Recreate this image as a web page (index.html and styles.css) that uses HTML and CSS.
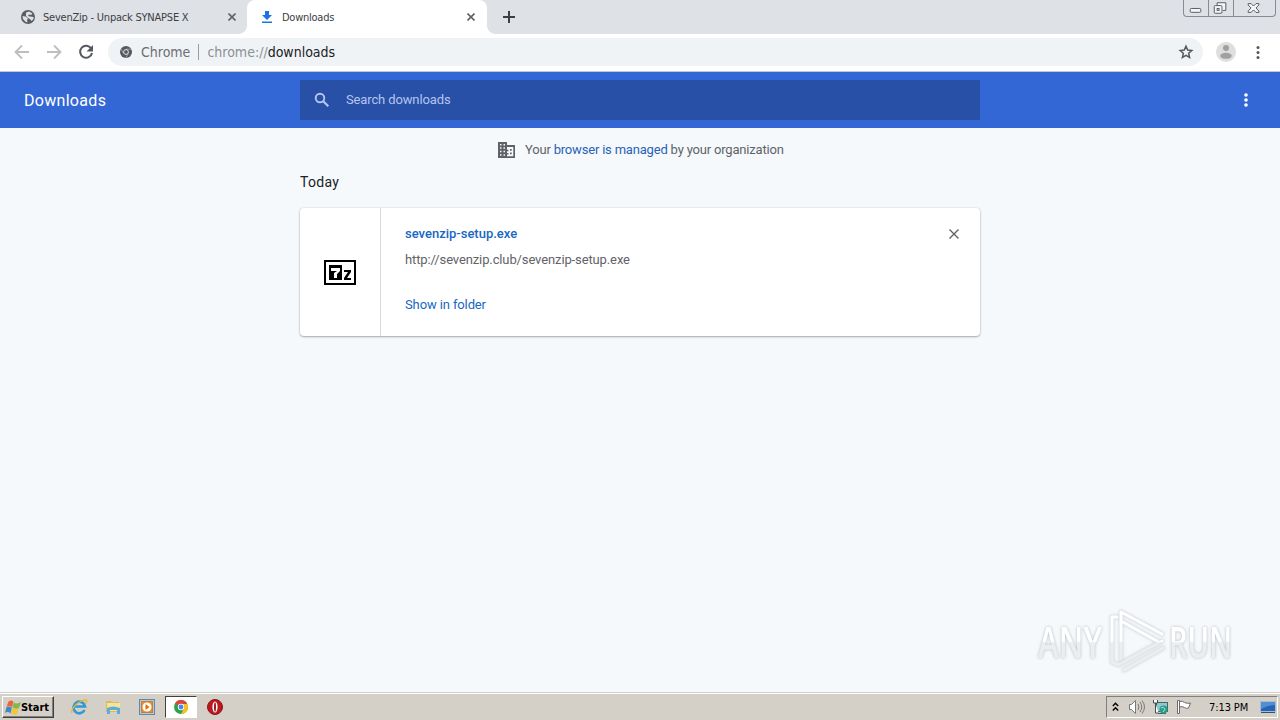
FILE: index.html
```html
<!DOCTYPE html>
<html lang="en">
  <head>
    <meta charset="UTF-8" />
    <meta name="viewport" content="width=device-width, initial-scale=1.0" />
    <title>Downloads</title>
    <link rel="stylesheet" href="styles.css">
  </head>
  <body>
    <!-- Tab strip -->
    <div class="tabs">
      <div class="tab tab-back">
        <svg class="favicon" width="14" height="14" viewBox="0 0 14 14">
          <circle cx="7" cy="7" r="7" fill="#5a5e63" />
          <path d="M1.500 6l3 .5 2.500 2-1 1.500.5 2.500-2-.7L2 9zM5 2.500l3-1 3.500 2L10 5l-2-.5-1 1.500 2 .5 3.500.5v2l-2 2-1.500-2-2-1-2-2z" fill="#dee1e6" />
        </svg>
        <span class="tab-title title-back">SevenZip - Unpack SYNAPSE X</span>
        <svg class="tab-close" width="8" height="8" viewBox="0 0 8 8"><path d="M.5.5l7 7m0-7l-7 7" /></svg>
      </div>
      <div class="tab tab-active">
        <svg class="favicon" width="14" height="14" viewBox="0 0 14 14">
          <path d="M5 1h4v4h3L7 10 2 5h3zM2 11.500h10V13H2z" fill="#1a73e8" />
        </svg>
        <span class="tab-title title-active">Downloads</span>
        <svg class="tab-close" width="8" height="8" viewBox="0 0 8 8"><path d="M.5.5l7 7m0-7l-7 7" /></svg>
      </div>
      <svg class="new-tab" width="12" height="12" viewBox="0 0 12 12"><path d="M6 0v12M0 6h12" /></svg>
      <div class="win-buttons">
        <svg width="25" height="16" viewBox="0 0 25 16"><rect x="6.500" y="8.500" width="11" height="4" rx="1" /></svg>
        <svg width="25" height="16" viewBox="0 0 25 16">
          <path d="M8.500 5.500v-3h9v8h-3" /><rect x="5.500" y="5.500" width="8" height="8" rx="1" /><rect x="8.500" y="8.500" width="2" height="2" />
        </svg>
        <svg width="42" height="16" viewBox="0 0 42 16">
          <path d="M14.500 3.500h3l2.500 2.500 2.500-2.500h3v1.500L22.500 8l3 3v1.500h-3L20 10l-2.500 2.500h-3V11l3-3-3-3z" />
        </svg>
      </div>
    </div>

    <!-- Toolbar -->
    <div class="toolbar">
      <svg class="nav-icon" width="16" height="16" viewBox="0 0 16 16"><path d="M15 8H2M8 1.500L1.500 8 8 14.500" stroke="#bcbec1" /></svg>
      <svg class="nav-icon" width="16" height="16" viewBox="0 0 16 16"><path d="M1 8h13M8 1.500L14.500 8 8 14.500" stroke="#bcbec1" /></svg>
      <svg class="nav-icon" width="16" height="16" viewBox="0 0 16 16">
        <path d="M13.200 4.500A6 6 0 1 0 14 9" stroke="#55585c" stroke-width="2" /><path d="M15 1v6.500H8.500z" fill="#55585c" />
      </svg>
      <div class="omnibox">
        <svg width="12" height="12" viewBox="0 0 12 12">
          <circle cx="6" cy="6" r="6" fill="#55585c" />
          <path d="M6 3.200h5.300M3.600 7.400L1 3M8.400 7.400L5.800 11.800" stroke="#b9bdc1" stroke-width=".7" />
          <circle cx="6" cy="6" r="2.400" fill="#55585c" stroke="#e0e3e6" stroke-width="1" />
        </svg>
        <span class="site">Chrome</span>
        <span class="divider"></span>
        <span class="url"><span class="scheme">chrome://</span><span class="host">downloads</span></span>
        <svg class="star" width="16" height="16" viewBox="0 0 16 16">
          <path d="M8 2.200l1.700 3.900 4.100.4-3.100 2.800.9 4.100L8 11.300l-3.600 2.100.9-4.100-3.100-2.800 4.100-.4z" />
        </svg>
      </div>
      <svg class="avatar" width="20" height="20" viewBox="0 0 20 20">
        <circle cx="10" cy="10" r="10" fill="#dedede" />
        <circle cx="10" cy="6" r="3" fill="#a0a0a0" /><ellipse cx="10" cy="13.800" rx="5.800" ry="3" fill="#a0a0a0" />
      </svg>
      <svg class="menu" width="4" height="14" viewBox="0 0 4 14" fill="#55585c">
        <circle cx="2" cy="2.500" r="1.500" /><circle cx="2" cy="7.500" r="1.500" /><circle cx="2" cy="12.500" r="1.500" />
      </svg>
    </div>

    <!-- Downloads page header -->
    <header>
      <h1>Downloads</h1>
      <div class="search">
        <svg width="16" height="16" viewBox="0 0 16 16" fill="none" stroke="#b4c5ee">
          <circle cx="6" cy="6" r="4.300" stroke-width="1.900" /><path d="M9.300 9.300l5 5" stroke-width="2.200" />
        </svg>
        <span>Search downloads</span>
      </div>
      <svg class="more" width="4" height="14" viewBox="0 0 4 14" fill="#fff">
        <circle cx="2" cy="2" r="1.800" /><circle cx="2" cy="7" r="1.800" /><circle cx="2" cy="12" r="1.800" />
      </svg>
    </header>

    <main>
      <div class="managed">
        <svg width="17" height="16" viewBox="0 0 17 16">
          <path d="M0 0h9v3h8v13H0z" fill="#5f6368" />
          <path d="M2 2h1.500v1.500H2zM5.500 2H7v1.500H5.500zM2 5.300h1.500v1.500H2zM5.500 5.300H7v1.500H5.500zM2 8.800h1.500v1.500H2zM5.500 8.800H7v1.500H5.500zM2 12.300h1.500v1.500H2zM5.500 12.300H7v1.500H5.500zM9 5h6.300v9.300H9v-1.700h1.500v-1.500H9V9.300h1.500V7.800H9z" fill="#f5f9fc" />
          <path d="M12 7h1.700v1.700H12zM12 10.500h1.700v1.700H12z" fill="#5f6368" />
        </svg>
        <p>Your <a>browser is managed</a> by your organization</p>
      </div>
      <h2>Today</h2>
      <div class="card">
        <div class="file-icon">
          <svg width="32" height="25" viewBox="0 0 32 25">
            <rect x="1" y="1" width="30" height="23" fill="#fff" stroke="#000" stroke-width="2" />
            <path d="M5 5h13v15H5z" />
            <path d="M7 8h9v3l-3 3v4h-3v-5l3-2H7z" fill="#fff" />
            <path d="M20 10h7v2l-4 6h4v2h-7v-2l4-6h-4z" />
          </svg>
        </div>
        <div class="details">
          <a class="name">sevenzip-setup.exe</a>
          <p class="source">http://sevenzip.club/sevenzip-setup.exe</p>
          <a class="show">Show in folder</a>
        </div>
        <svg class="remove" width="10" height="10" viewBox="0 0 10 10"><path d="M.5.5l9 9m0-9l-9 9" /></svg>
      </div>

      <!-- Watermark -->
      <div class="watermark">
        <svg width="220" height="80" viewBox="0 0 220 80">
          <defs>
            <linearGradient id="fade" x1="0" y1="0" x2="0" y2="80" gradientUnits="userSpaceOnUse">
              <stop offset="0.490" stop-color="#fff" />
              <stop offset="0.510" stop-color="#ebedef" />
            </linearGradient>
          </defs>
          <g class="mark-text" fill="url(#fade)">
            <text x="8" y="56" textLength="64" lengthAdjust="spacingAndGlyphs">ANY</text>
            <text x="139" y="56" textLength="63" lengthAdjust="spacingAndGlyphs">RUN</text>
          </g>
          <g class="mark-edge"><path d="M87 15h-5v45l7 3M91 57V10l41 22M91 19l36 20M90 62l42-23M94 68l39-22" /></g>
          <g class="mark-play"><path d="M87 15h-5v45l7 3M91 57V10l41 22M91 19l36 20M90 62l42-23M94 68l39-22" /></g>
        </svg>
      </div>
    </main>

    <!-- Taskbar -->
    <div class="taskbar">
      <div class="start">
        <svg width="16" height="15" viewBox="0 0 16 15">
          <path d="M3.500 1.500q3-2 5 .5L7 7.500Q4.500 5 1.500 7z" fill="#e8663a" /><path d="M9 2.500q3 2 7-.5L14 8Q11 9.500 7.500 7.500z" fill="#83b84b" />
          <path d="M1.300 7.500q3-2 5.500.5L5.500 13.500Q3 11 0 13z" fill="#4387c9" /><path d="M7.400 8q3 2 6.300.5L12 14q-3 1.500-6-.5z" fill="#f2c63a" />
        </svg>
        <span>Start</span>
      </div>
      <div class="apps">
        <div class="app">
          <svg width="18" height="18" viewBox="0 0 18 18" fill="none">
            <path d="M14.500 12A5.800 5.800 0 1 1 15 8.500H5" stroke="#3299d8" stroke-width="2.700" />
            <path d="M2 15C0 12 7 4 14 2c4-1 3 2 1 4" stroke="#e8b638" stroke-width="1.300" />
          </svg>
        </div>
        <div class="app">
          <svg width="16" height="16" viewBox="0 0 16 16">
            <path d="M1 2h5l1 1h7v10H1z" fill="#ddb95a" /><path d="M2 4h13v8H2z" fill="#f7e49b" />
            <path d="M2 9q6-3 13 0v6h-3v-4H5v4H2z" fill="#5baedb" />
          </svg>
        </div>
        <div class="app">
          <svg width="16" height="16" viewBox="0 0 16 16">
            <rect x=".5" y=".5" width="15" height="15" fill="#a6cdee" stroke="#5889b7" />
            <rect x="2.500" y="2.500" width="11" height="11" fill="#f28b20" stroke="#d97917" />
            <circle cx="8" cy="8" r="4.500" fill="#fff" /><path d="M6.500 5l4 3-4 3z" fill="#dd6c0b" />
          </svg>
        </div>
        <div class="app app-open">
          <svg width="14" height="14" viewBox="0 0 14 14">
            <circle cx="7" cy="7" r="7" fill="#2ba24c" />
            <path d="M7 7L.9 3.500A7 7 0 0 1 13.100 3.500z" fill="#dd4437" />
            <path d="M7 4h6.300A7 7 0 0 1 7 14l3-6z" fill="#fbc116" />
            <circle cx="7" cy="7" r="3.200" fill="#fff" /><circle cx="7" cy="7" r="2.400" fill="#4285f4" />
          </svg>
        </div>
        <div class="app">
          <svg width="16" height="16" viewBox="0 0 16 16">
            <circle cx="8" cy="8" r="7.500" fill="#bd1820" stroke="#8d1218" /><ellipse cx="8" cy="8" rx="2.600" ry="5.500" fill="#fff" />
            <ellipse cx="8" cy="8" rx="1" ry="4.800" fill="#a5181c" />
          </svg>
        </div>
      </div>
      <div class="tray">
        <svg width="7" height="10" viewBox="0 0 7 10" fill="none" stroke="#000" stroke-width="1.400"><path d="M.8 4l2.700-2.700L6.200 4M.8 8.500l2.700-2.700 2.700 2.700" /></svg>
        <svg class="volume" width="17" height="16" viewBox="0 0 17 16" fill="none" stroke="#77797b">
          <path d="M1.500 5.500h2l4-4v13l-4-4h-2z" fill="#fff" /><path d="M10 5q2 3 0 6M12 3q3.500 5 0 10M14 1.500q5 6.500 0 13" />
        </svg>
        <svg class="network" width="17" height="16" viewBox="0 0 17 16">
          <rect x="4.500" y="3.500" width="11" height="9" fill="#8bc9d2" stroke="#4b6265" /><path d="M6 14.500h8" stroke="#4b6265" />
          <circle cx="11.500" cy="10.500" r="4" fill="#2b9c88" /><path d="M9 9q3-2 4 1l-2 3" stroke="#a6e3cd" fill="none" />
          <path d="M1.500 1v3h4V1M3.500 4v10h3" stroke="#4a4a4a" fill="#fff" />
        </svg>
        <svg class="flag" width="16" height="16" viewBox="0 0 16 16">
          <path d="M1.500 1.500h2v13h-2zM3.500 2.500q3-1 5 1 3 1.500 6 .5l-2 5q-2 1-4-.5-2-1.500-5-.5z" fill="#fff" stroke="#6b6b6b" />
        </svg>
        <span class="clock">7:13 PM</span>
        <svg class="desktop" width="16" height="13" viewBox="0 0 16 13">
          <rect x=".5" y=".5" width="15" height="10" fill="#2364b5" stroke="#a7bbd1" /><path d="M1 1h14v3Q8 4 1 8z" fill="#538ed3" />
          <path d="M1 11.500h14" stroke="#384d69" />
        </svg>
      </div>
    </div>
  </body>
</html>
```
FILE: styles.css
```css
* {
  margin: 0;
  padding: 0;
  box-sizing: border-box;
}

body {
  width: 1280px;
  height: 720px;
  overflow: hidden;
  display: flex;
  flex-direction: column;
  background: #f5f9fc;
  font-family: Roboto, "Liberation Sans", sans-serif;
  white-space: nowrap;
}

svg {
  display: block;
  flex-shrink: 0;
}

/* Tab strip */
.tabs {
  display: flex;
  align-items: center;
  height: 34px;
  background: #dee1e6;
}

.tab {
  display: flex;
  align-items: center;
  height: 34px;
  font-family: "DejaVu Sans Condensed", "DejaVu Sans", sans-serif;
  font-size: 11px;
  color: #3c4043;
}

.tab-back {
  width: 247px;
  padding: 0 11px 0 21px;
}

.tab-active {
  position: relative;
  width: 240px;
  padding: 0 12px 0 13px;
  background: #fff;
  border-radius: 8px 8px 0 0;
}

.tab-active::before,
.tab-active::after {
  content: "";
  position: absolute;
  bottom: 0;
  width: 8px;
  height: 8px;
}

.tab-active::before {
  left: -8px;
  background: radial-gradient(circle at 0 0, transparent 7.5px, #fff 8px);
}

.tab-active::after {
  right: -8px;
  background: radial-gradient(circle at 100% 0, transparent 7.5px, #fff 8px);
}

.tab-title {
  margin-left: 8px;
}

.title-back {
  letter-spacing: -0.22px;
}

.title-active {
  letter-spacing: -0.25px;
}

.tab-close {
  margin-left: auto;
  fill: none;
  stroke: #5f6368;
  stroke-width: 1.6;
}

.new-tab {
  margin-left: 16px;
  stroke: #3c4043;
  stroke-width: 2;
}

.win-buttons {
  display: flex;
  align-self: flex-start;
  height: 17px;
  margin: 0 4px 0 auto;
  border: 1px solid #878b92;
  border-top: none;
  border-radius: 0 0 4px 4px;
}

.win-buttons svg {
  fill: #f5f6f8;
  stroke: #555a61;
}

.win-buttons svg:first-child {
  width: 24px;
}

.win-buttons svg + svg {
  border-left: 1px solid #878b92;
}

/* Toolbar */
.toolbar {
  display: flex;
  align-items: center;
  height: 38px;
  padding: 0 20px 2px 14px;
  background: #fff;
  border-bottom: 1px solid #c3c8d2;
}

.nav-icon {
  margin-right: 16px;
  fill: none;
  stroke-width: 1.8;
}

.omnibox {
  display: flex;
  align-items: center;
  width: 1095px;
  height: 28px;
  margin-left: -2px;
  padding: 0 9px 0 12px;
  border-radius: 14px;
  background: #f0f3f5;
  font-family: "DejaVu Sans Condensed", "DejaVu Sans", sans-serif;
  font-size: 14px;
}

.site {
  margin-left: 9px;
  color: #6a6e73;
}

.divider {
  width: 1px;
  height: 16px;
  margin: 0 8px;
  background: #9a9da1;
}

.scheme {
  color: #8b9095;
}

.host {
  color: #202124;
}

.star {
  margin-left: auto;
  fill: none;
  stroke: #55585c;
  stroke-width: 1.5;
}

.avatar {
  margin-left: 13px;
}

.menu {
  margin-left: auto;
}

/* Page header */
header {
  display: flex;
  align-items: center;
  height: 56px;
  padding: 0 32px 0 24px;
  background: #3367d6;
}

h1 {
  width: 276px;
  color: #fff;
  font-size: 16px;
  font-weight: 400;
  letter-spacing: 0.3px;
}

.search {
  display: flex;
  align-items: center;
  gap: 16px;
  width: 680px;
  height: 40px;
  padding-left: 14px;
  background: #2850a7;
  color: #b4c5ee;
  font-size: 13px;
  letter-spacing: -0.13px;
}

.search span {
  padding-bottom: 2px;
}

.more {
  margin-left: auto;
}

/* Download list */
main {
  position: relative;
  width: 100%;
  flex: 1;
  padding: 14px 300px 0;
}

.managed {
  display: flex;
  align-items: center;
  gap: 10px;
  height: 16px;
  padding-left: 198px;
  color: #5f6368;
  font-size: 13px;
  letter-spacing: -0.19px;
}

.managed p {
  padding-bottom: 2px;
}

.managed a {
  color: #2a62b8;
}

h2 {
  margin-top: 16px;
  font-size: 14px;
  font-weight: 400;
  line-height: 17px;
  letter-spacing: 0.3px;
  color: #202124;
}

.card {
  display: flex;
  height: 128px;
  margin-top: 17px;
  background: #fff;
  border-radius: 4px;
  box-shadow: 0 1px 2px rgba(60, 64, 67, 0.4), 0 0 2px rgba(60, 64, 67, 0.2);
}

.file-icon {
  display: flex;
  align-items: center;
  justify-content: center;
  width: 81px;
  border-right: 1px solid #d9dbde;
}

.details {
  display: flex;
  flex-direction: column;
  padding: 18px 0 0 24px;
  font-size: 13px;
  line-height: 16px;
  letter-spacing: -0.12px;
}

.name {
  color: #1967c2;
  font-weight: 500;
  letter-spacing: 0;
}

.source {
  margin-top: 10px;
  color: #5f6368;
}

.show {
  margin-top: 29px;
  color: #1967c2;
}

.remove {
  margin: 21px 21px 0 auto;
  stroke: #5f6368;
  stroke-width: 1.4;
}

.watermark {
  position: absolute;
  right: 30px;
  bottom: 10px;
}

.mark-text {
  font-family: "Open Sans", "Liberation Sans", sans-serif;
  font-size: 43px;
  font-weight: 600;
  filter: drop-shadow(0 0 1.5px rgba(110, 110, 110, 0.45));
}

.mark-edge path {
  fill: none;
  stroke: #d8dbdd;
  stroke-width: 5;
  stroke-linejoin: round;
  stroke-linecap: round;
  filter: blur(1px);
}

.mark-play path {
  fill: none;
  stroke: url(#fade);
  stroke-width: 3;
  stroke-linejoin: round;
  stroke-linecap: round;
}

/* Taskbar */
.taskbar {
  display: flex;
  align-items: center;
  height: 28px;
  padding: 1px 2px 0;
  background: #d4d0c8;
  border-top: 1px solid #d4d0c8;
  box-shadow: inset 0 1px #fff;
}

.start {
  display: flex;
  align-items: center;
  width: 52px;
  height: 22px;
  padding-left: 2px;
  border: 1px solid;
  border-color: #fff #404040 #404040 #fff;
  box-shadow: inset -1px -1px #808080;
  font-family: "DejaVu Sans Condensed", sans-serif;
  font-size: 11px;
  font-weight: bold;
  letter-spacing: -0.05px;
}

.apps {
  display: flex;
  gap: 2px;
  margin-left: 9px;
}

.app {
  display: flex;
  align-items: center;
  justify-content: center;
  width: 32px;
  height: 22px;
}

.app-open {
  background: #fff;
  border: 1px solid;
  border-color: #404040 #fff #fff #404040;
}

.tray {
  display: flex;
  align-items: center;
  width: 172px;
  height: 22px;
  margin-left: auto;
  padding-left: 5px;
  border: 1px solid;
  border-color: #808080 #fff #fff #808080;
}

.volume {
  margin-left: 9px;
}

.network {
  margin-left: 7px;
}

.flag {
  margin-left: 7px;
}

.clock {
  margin-left: 17px;
  font-family: "DejaVu Sans Condensed", sans-serif;
  font-size: 11px;
  letter-spacing: -0.1px;
}

.desktop {
  margin: 0 1px 0 auto;
}
```
